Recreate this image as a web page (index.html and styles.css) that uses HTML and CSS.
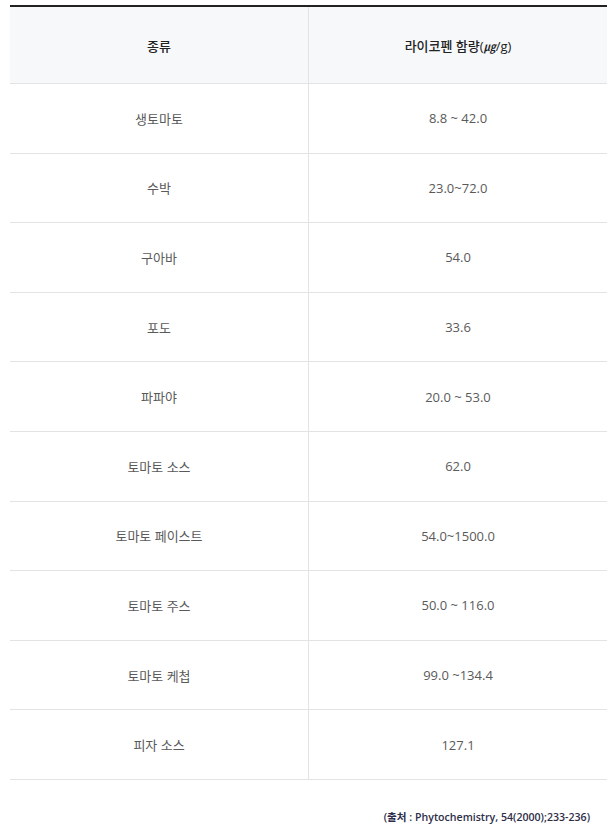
FILE: index.html
```html
<!DOCTYPE html>
<html lang="ko">
<head>
<meta charset="utf-8">
<link rel="stylesheet" href="styles.css">
</head>
<body>
<div class="wrap">
  <table class="tbl">
    <thead>
      <tr><th>종류</th><th>라이코펜 함량(<span class="mu">㎍</span>/g)</th></tr>
    </thead>
    <tbody>
      <tr><td>생토마토</td><td>8.8 ~ 42.0</td></tr>
      <tr><td>수박</td><td>23.0~72.0</td></tr>
      <tr><td>구아바</td><td>54.0</td></tr>
      <tr><td>포도</td><td>33.6</td></tr>
      <tr><td>파파야</td><td>20.0 ~ 53.0</td></tr>
      <tr><td>토마토 소스</td><td>62.0</td></tr>
      <tr><td>토마토 페이스트</td><td>54.0~1500.0</td></tr>
      <tr><td>토마토 주스</td><td>50.0 ~ 116.0</td></tr>
      <tr><td>토마토 케첩</td><td>99.0 ~134.4</td></tr>
      <tr><td>피자 소스</td><td>127.1</td></tr>
    </tbody>
  </table>
  <p class="source">(출처 : Phytochemistry, 54(2000);233-236)</p>
</div>
</body>
</html>
```
FILE: styles.css
```css
html, body { margin: 0; padding: 0; background: #fff; }
body { font-family: "Open Sans", "Noto Sans CJK KR", sans-serif; }
.wrap { padding: 5px 5px 0 10px; }
.tbl {
  width: 597px;
  border-collapse: collapse;
  table-layout: fixed;
  border-top: 2px solid #222;
}
.tbl th, .tbl td {
  text-align: center;
  font-size: 13px;
  padding: 0;
  border-bottom: 1px solid #e3e3e3;
}
.tbl th + th, .tbl td + td { border-left: 1px solid #e3e3e3; }
.tbl th:first-child, .tbl td:first-child { width: 298px; }
.tbl th {
  height: 76px;
  background: #f7f8fa;
  color: #222;
  font-weight: 500;
}
.tbl td {
  height: 68.6px;
  color: #5a5a5a;
}
.mu { font-style: italic; font-size: 12px; }
.source {
  margin: 0;
  padding: 29px 17px 0 0;
  text-align: right;
  font-size: 10.6px;
  font-weight: 600;
  color: #2e2e4a;
}
```
